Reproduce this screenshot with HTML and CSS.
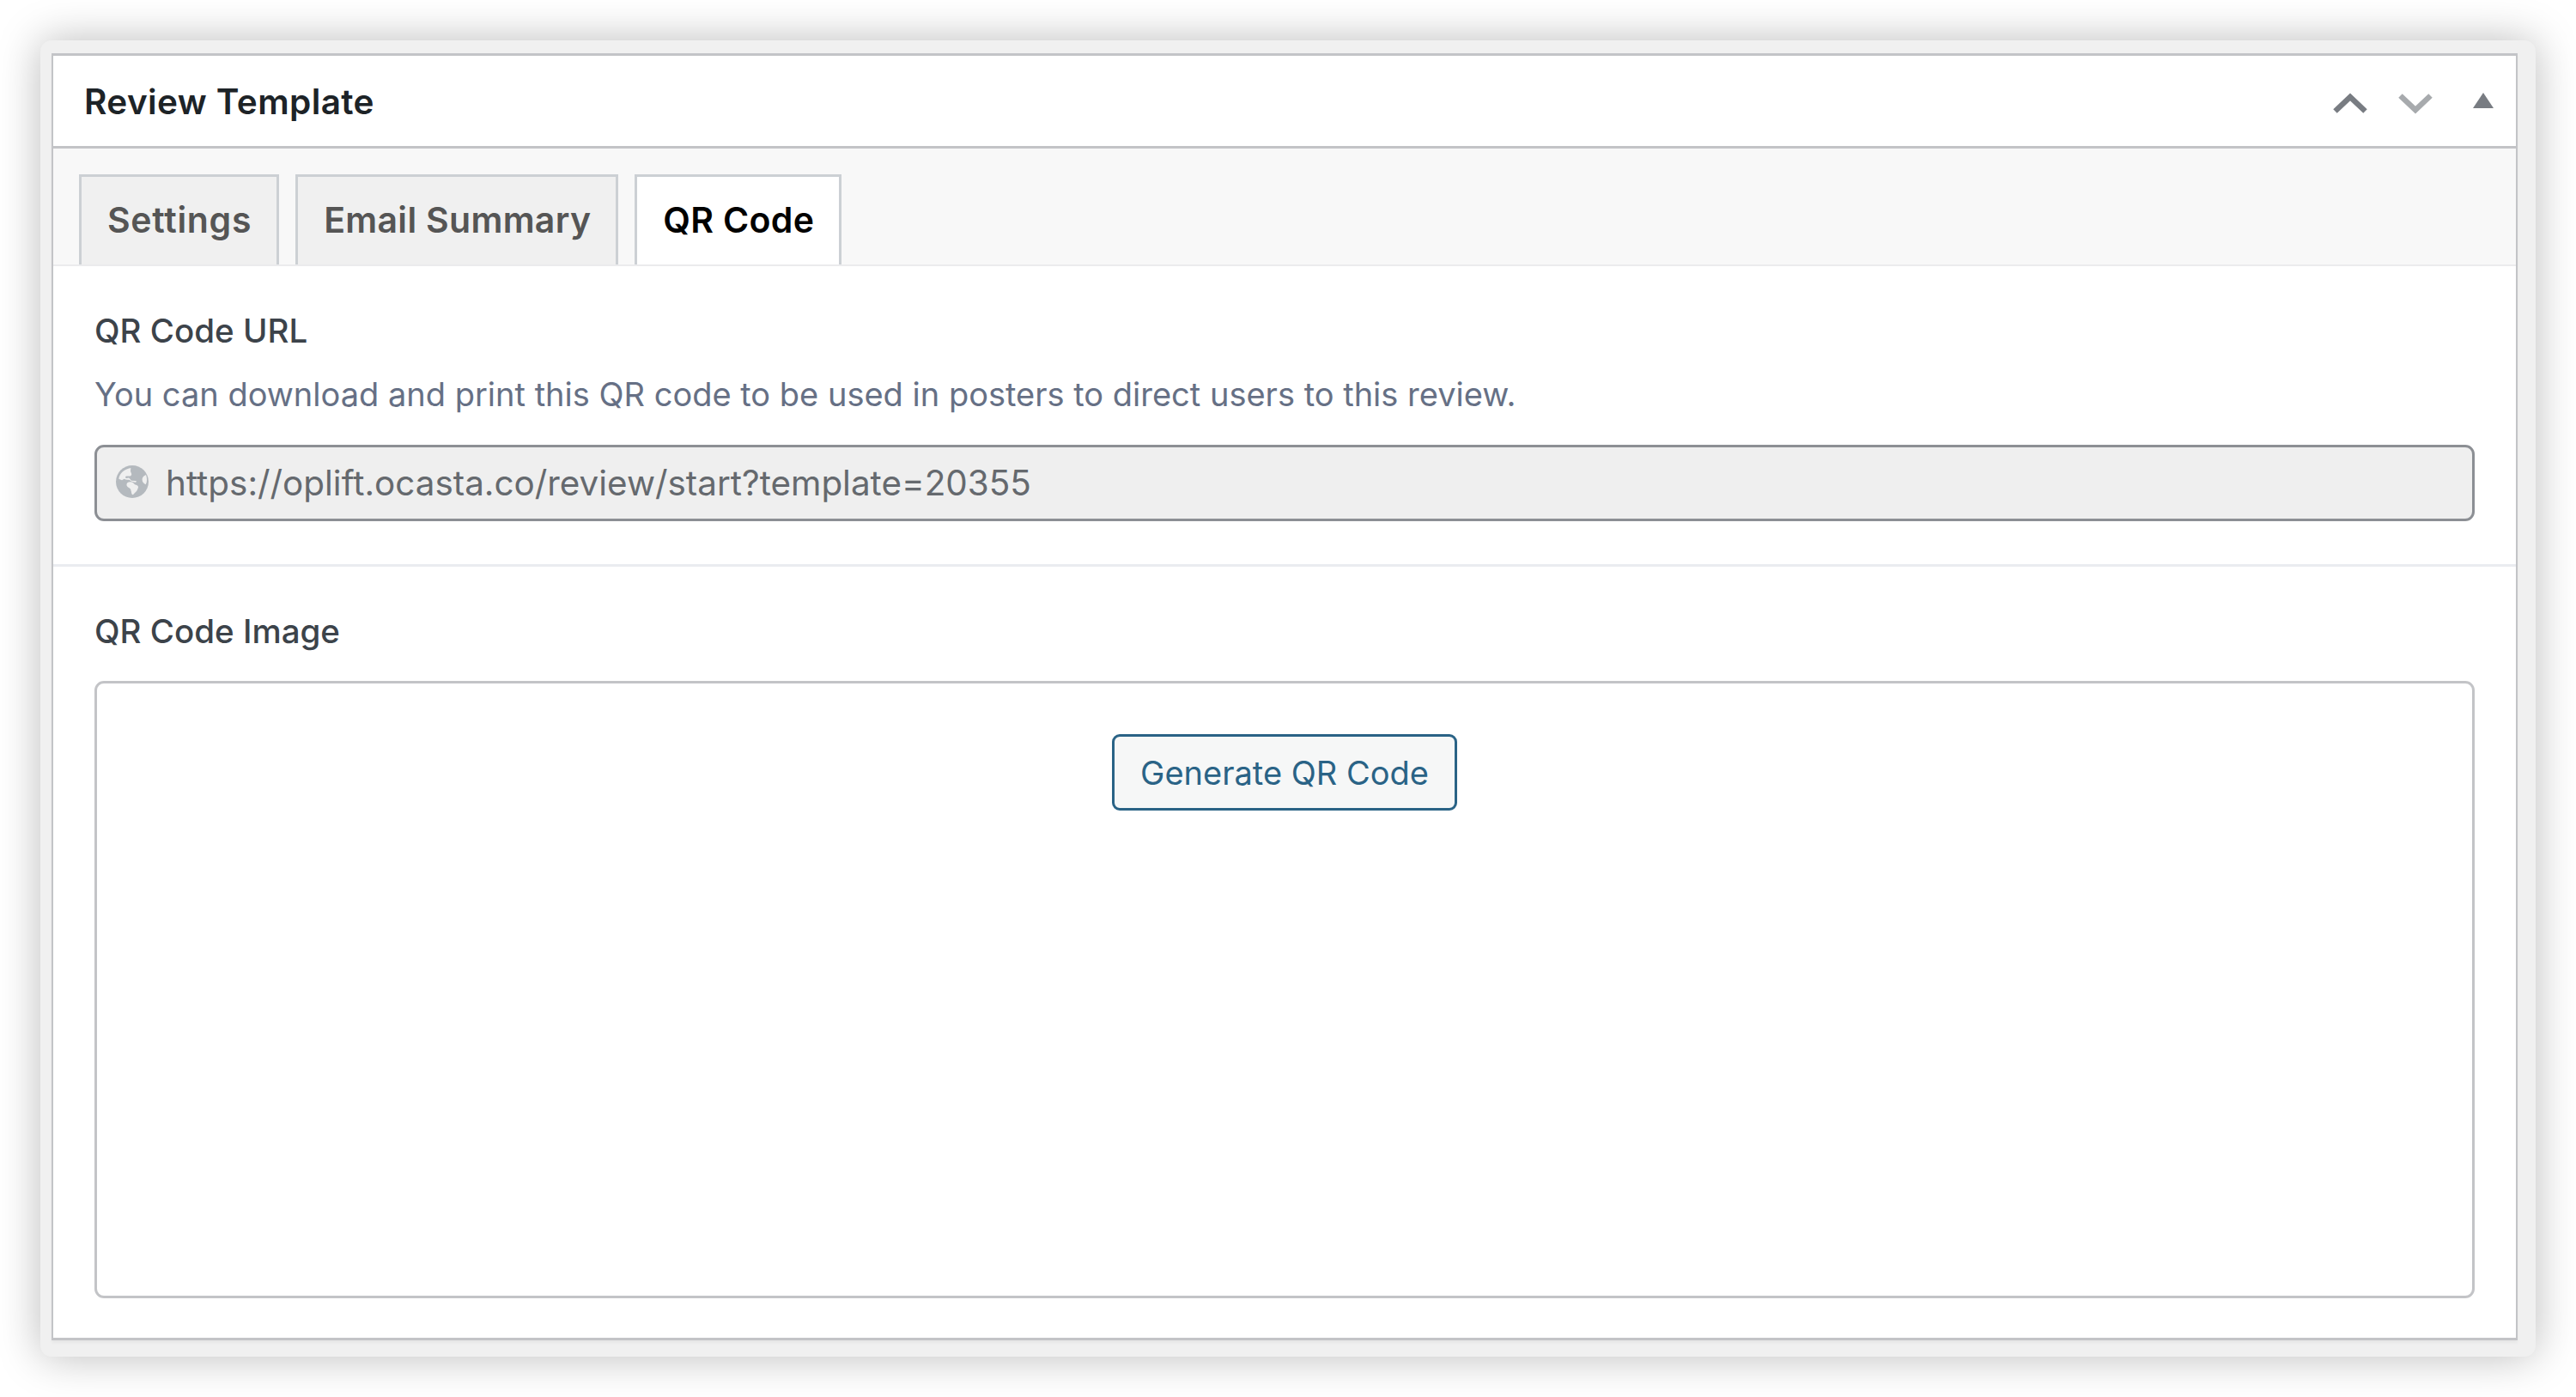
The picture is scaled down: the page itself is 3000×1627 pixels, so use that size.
FILE: index.html
```html
<!DOCTYPE html>
<html lang="en">
<head>
    <meta charset="UTF-8">
    <meta name="viewport" content="width=device-width, initial-scale=1.0">
    <title>Review Template</title>
    <link rel="stylesheet" href="styles.css">
</head>
<body>
    <div class="frame">
        <div class="postbox">
            <div class="postbox-header">
                <h2>Review Template</h2>
                <div class="actions">
                    <svg class="up" width="42" height="26" viewBox="0 0 42 26">
                        <path d="M3.5 21.5L21 5L38.5 21.5" fill="none" stroke="#787c82" stroke-width="6.5"/>
                    </svg>
                    <svg class="down" width="42" height="26" viewBox="0 0 42 26">
                        <path d="M3.5 3.5L21 20L38.5 3.5" fill="none" stroke="#a7aaad" stroke-width="6.5"/>
                    </svg>
                    <svg class="toggle" width="24" height="18" viewBox="0 0 24 18">
                        <path d="M12 0L24 18H0z" fill="#787c82"/>
                    </svg>
                </div>
            </div>

            <div class="tabs">
                <a class="tab settings">Settings</a>
                <a class="tab">Email Summary</a>
                <a class="tab active">QR Code</a>
            </div>

            <div class="field">
                <label>QR Code URL</label>
                <p class="description">You can download and print this QR code to be used in posters to direct users to this review.</p>
                <div class="url-input">
                    <svg width="38" height="38" viewBox="0 0 114 114">
                        <circle cx="57" cy="57" r="57" fill="#b4b9be"/>
                        <path fill="#efefef" d="M10 47C13 28 28 13 52 9L51 20C53 27 57 30 53 35C48 40 41 36 35 38C31 41 33 45 38 45C43 42 47 43 49 47L54 53L69 54C73 54 72 59 68 59L57 57C52 55 49 50 44 50C38 51 33 50 29 47L21 52z"/>
                        <path fill="#efefef" d="M40 61C46 56 55 58 60 61L66 67C71 69 79 70 78 77C76 82 74 88 70 92C65 96 63 101 58 103C53 99 55 92 52 87C53 82 49 80 44 77C38 74 35 68 40 61z"/>
                        <path fill="#efefef" d="M105 33C98 36 91 42 92 51C92 58 97 63 104 67C110 57 109 44 105 33z"/>
                    </svg>
                    <span>https://oplift.ocasta.co/review/start?template=20355</span>
                </div>
            </div>

            <div class="field qr-image">
                <label>QR Code Image</label>
                <div class="qr-box">
                    <button>Generate QR Code</button>
                </div>
            </div>
        </div>
    </div>
</body>
</html>
```
FILE: styles.css
```css
*{
    margin: 0;
    padding: 0;
    box-sizing: border-box;
    font-family: Inter, "Liberation Sans", sans-serif;
}
body{
    background-color: #fff;
    padding: 47px;
}
.frame{
    height: 1533px;
    padding: 15px 21px 19px 13px;
    background-color: #f0f0f0;
    border-radius: 13px;
    box-shadow: 0 0 50px rgba(0, 0, 0, 0.27);
}
.postbox{
    height: 100%;
    display: flex;
    flex-direction: column;
    background-color: #fff;
    border: solid #c3c4c7;
    border-width: 3px 2px;
    box-shadow: 0 3px 3px rgba(0, 0, 0, 0.04);
}
.postbox-header{
    display: flex;
    justify-content: space-between;
    height: 108px;
    padding: 0 26px 0 36px;
    border-bottom: 3px solid #c3c4c7;
}
.postbox-header h2{
    font-size: 40.5px;
    font-weight: 600;
    line-height: 107px;
    letter-spacing: 0.4px;
    color: #1d2327;
}
.actions{
    display: flex;
    align-items: flex-start;
    padding-top: 43px;
}
.actions .down{
    margin-left: 34px;
}
.actions .toggle{
    margin-left: 46px;
}
.tabs{
    display: flex;
    gap: 19px;
    height: 137px;
    padding: 30px 30px 0;
    background-color: #f8f8f8;
    border-bottom: 2px solid #ebebed;
}
.tab{
    padding: 0 29px 0 30px;
    border: 3px solid #ccd0d4;
    border-bottom: none;
    background-color: #f0f0f0;
    font-size: 41px;
    font-weight: 600;
    line-height: 100px;
    letter-spacing: 0.3px;
    color: #555;
}
.tab.settings{
    letter-spacing: 0.7px;
}
.tab.active{
    background-color: #fff;
    color: #000;
}
.field{
    padding: 52px 48px 50px;
}
.field label{
    display: block;
    font-size: 38.5px;
    font-weight: 500;
    line-height: 46px;
    color: #3c434a;
}
.description{
    margin-top: 28px;
    font-size: 38px;
    line-height: 46px;
    color: #667085;
}
.url-input{
    display: flex;
    align-items: center;
    height: 89px;
    margin-top: 36px;
    padding-left: 22px;
    border: 3px solid #8c8f94;
    border-radius: 11px;
    background-color: #efefef;
    font-size: 40.4px;
    color: #65696e;
}
.url-input svg{
    margin: -4px 20px 0 0;
}
.qr-image{
    flex: 1;
    display: flex;
    flex-direction: column;
    padding: 52px 48px 46px;
    border-top: 3px solid #eaecf0;
}
.qr-box{
    flex: 1;
    margin-top: 35px;
    padding-top: 59px;
    border: 3px solid #c3c4c7;
    border-radius: 11px;
    text-align: center;
}
.qr-box button{
    width: 402px;
    height: 89px;
    padding-top: 1px;
    border: 3px solid #2a6386;
    border-radius: 9px;
    background-color: #f6f7f7;
    font-size: 38px;
    color: #2a6386;
}
```
